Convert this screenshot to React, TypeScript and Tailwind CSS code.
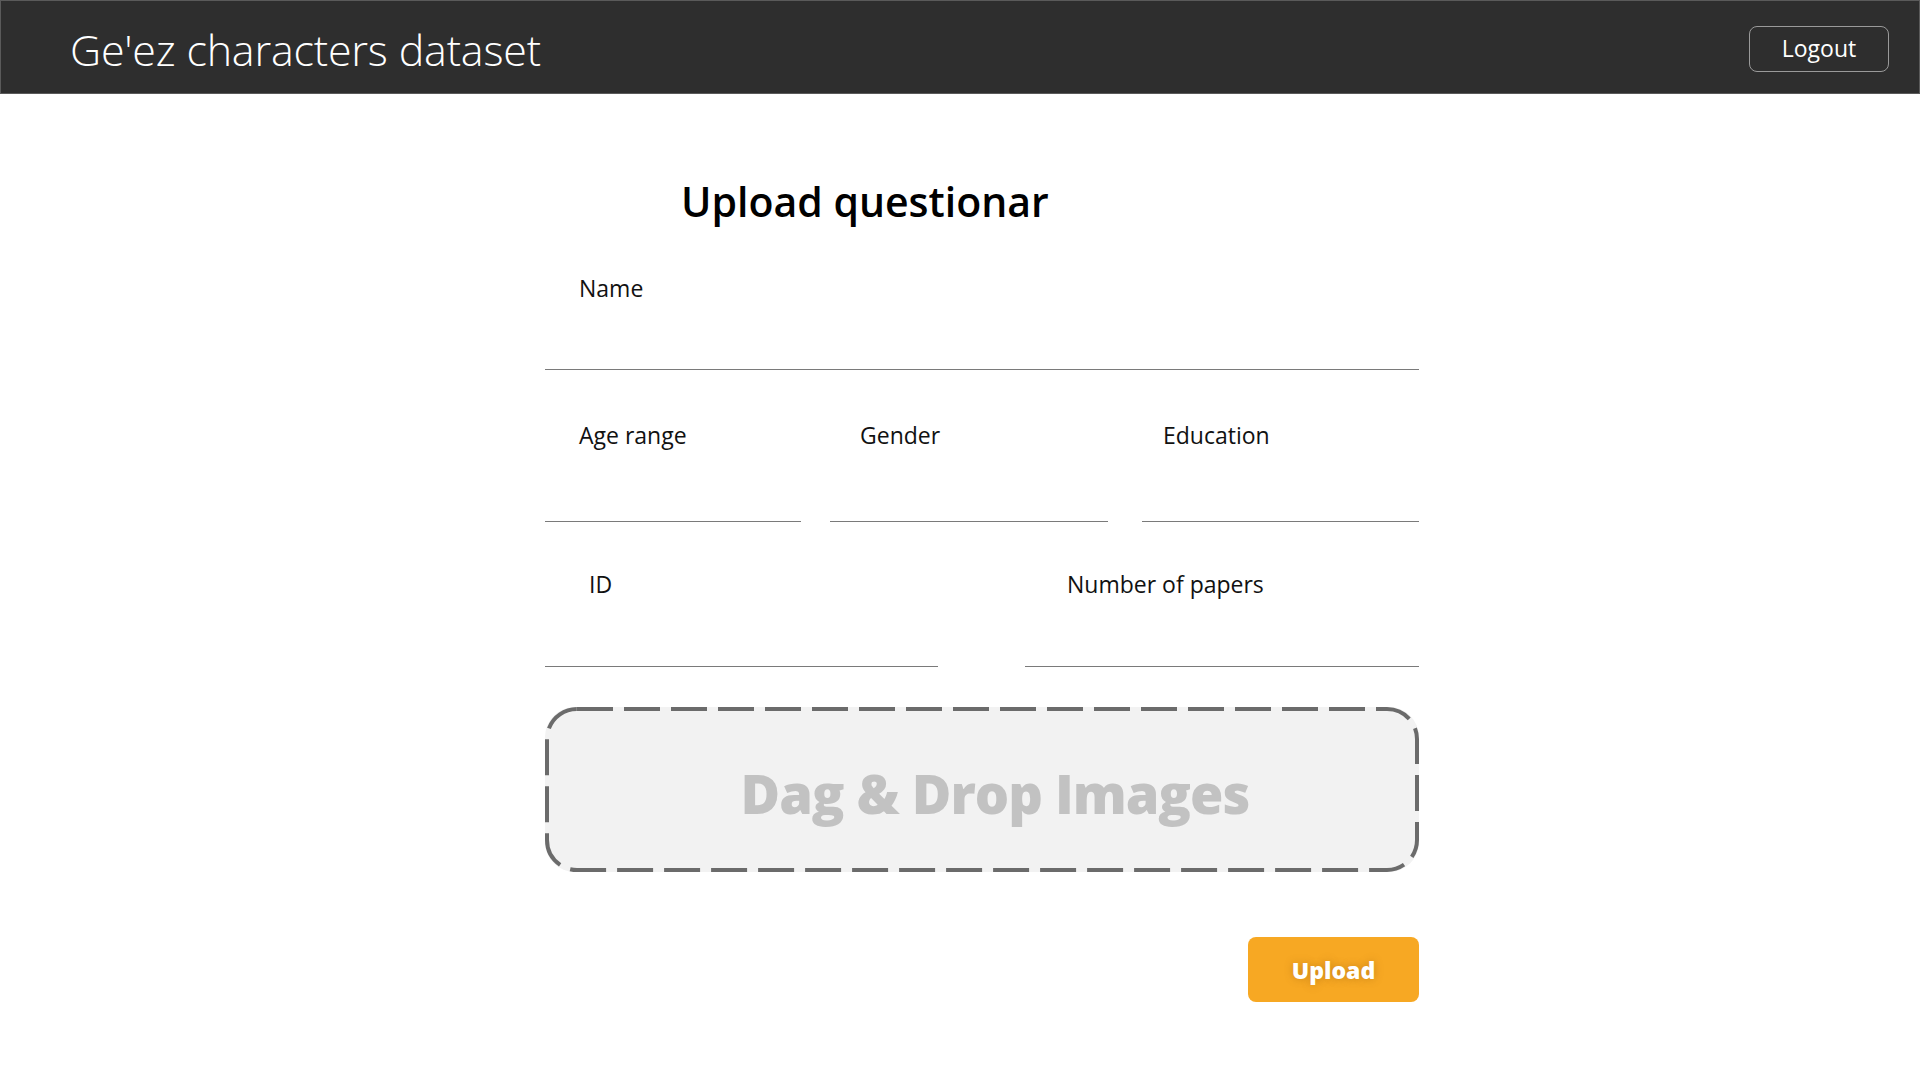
import React from 'react';

const sans = "font-['Open_Sans','Noto_Sans',sans-serif]";

function Field({ label, width, pad, h }: { label: string; width: string; pad: string; h: string }) {
  return (
    <div className={width}>
      <label className={`block ${pad} text-[23px] leading-[30px] text-[#111]`}>{label}</label>
      <div className={`${h} border-b-[1.5px] border-[#7a7a7a]`} />
    </div>
  );
}

export default function App() {
  return (
    <div className={`min-h-screen w-full bg-white ${sans}`}>
      {/* ── Header ─────────────────────────────────────── */}
      <header className="flex h-[94px] items-center justify-between border border-[#5a5a5a] bg-[#2e2e2e] pl-[69px] pr-[30px] pt-[5px]">
        <h1 className="text-[43px] font-light leading-none tracking-[-0.2px] text-white">Ge'ez characters dataset</h1>
        <button className="mb-[2px] h-[46px] w-[140px] rounded-[8px] border border-[#9a9a9a] text-[23px] leading-none text-white">
          Logout
        </button>
      </header>

      {/* ── Form ───────────────────────────────────────── */}
      <main className="ml-[545px] w-[874px]">
        <h2 className="ml-[136px] mt-[80px] text-[41px] font-semibold leading-[54px] text-black">Upload questionar</h2>

        <div className="mt-[45px]">
          <Field label="Name" width="w-full" pad="pl-[34px]" h="h-[67px]" />
        </div>

        <div className="mt-[50px] flex">
          <Field label="Age range" width="w-[256px]" pad="pl-[34px]" h="h-[72px]" />
          <div className="ml-[29px]">
            <Field label="Gender" width="w-[278px]" pad="pl-[30px]" h="h-[72px]" />
          </div>
          <div className="ml-[34px]">
            <Field label="Education" width="w-[277px]" pad="pl-[21px]" h="h-[72px]" />
          </div>
        </div>

        <div className="mt-[47px] flex justify-between">
          <Field label="ID" width="w-[393px]" pad="pl-[44px]" h="h-[68px]" />
          <Field label="Number of papers" width="w-[394px]" pad="pl-[42px]" h="h-[68px]" />
        </div>

        {/* drop zone */}
        <div className="relative mt-[40px] flex h-[165px] w-[874px] items-center justify-center rounded-[30px] bg-[#f2f2f2] pt-[8px]">
          <svg className="absolute inset-0" width="874" height="165" viewBox="0 0 874 165" fill="none">
            <rect x="2" y="2" width="870" height="161" rx="30" stroke="#6b6b6b" strokeWidth="4" strokeDasharray="36 11" />
          </svg>
          <span className="ml-[26px] text-[54px] font-extrabold tracking-[-1px] text-[#c2c2c2]">Dag &amp; Drop Images</span>
        </div>

        <div className="mt-[65px] flex justify-end">
          <button className="h-[65px] w-[171px] rounded-[8px] bg-[#f7a823] pt-[2px] text-[23px] font-extrabold text-white [text-shadow:0_0_8px_rgba(120,70,0,0.35)]">
            Upload
          </button>
        </div>
      </main>
    </div>
  );
}
